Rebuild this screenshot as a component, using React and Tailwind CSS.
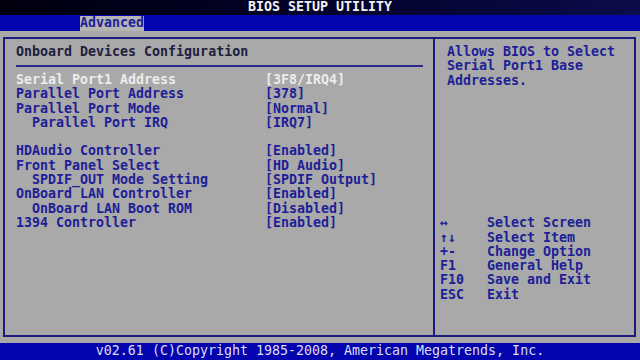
import React from 'react'

const rows = [
  { label: 'Serial Port1 Address', value: '[3F8/IRQ4]', active: true },
  { label: 'Parallel Port Address', value: '[378]' },
  { label: 'Parallel Port Mode', value: '[Normal]' },
  { label: 'Parallel Port IRQ', value: '[IRQ7]', sub: true },
  null,
  { label: 'HDAudio Controller', value: '[Enabled]' },
  { label: 'Front Panel Select', value: '[HD Audio]' },
  { label: 'SPDIF_OUT Mode Setting', value: '[SPDIF Output]', sub: true },
  { label: 'OnBoard LAN Controller', value: '[Enabled]' },
  { label: 'OnBoard LAN Boot ROM', value: '[Disabled]', sub: true },
  { label: '1394 Controller', value: '[Enabled]' },
]

const keys = [
  ['↔', 'Select Screen'],
  ['↑↓', 'Select Item'],
  ['+-', 'Change Option'],
  ['F1', 'General Help'],
  ['F10', 'Save and Exit'],
  ['ESC', 'Exit'],
]

export default function App() {
  return (
    <div className="w-[640px] h-[360px] flex flex-col bg-[#a9a9a9] overflow-hidden font-['DejaVu_Sans_Mono',monospace] font-bold text-[13.3px] leading-[14.3px] text-[#1e1e96]">
      {/* title */}
      <div className="h-[15px] flex items-center justify-center bg-gradient-to-r from-[#00000e] to-[#0c0c4a] text-[#f0f0f0]">
        BIOS SETUP UTILITY
      </div>
      {/* tabs */}
      <div className="h-[16px] flex items-center pl-[80px] bg-[#0505b0]">
        <span className="h-[15px] w-[64px] flex items-center bg-[#b4b4b4] text-[#1e1e9a]">Advanced</span>
      </div>

      <div className="flex-1 pt-[6px] pl-[3px] pr-[4px] pb-[6px]">
        <div className="h-full flex border-2 border-[#1c1c80]">
          {/* left panel */}
          <div className="w-[430px] pl-[11px] pr-[10px] pt-[6px] border-r-2 border-[#1c1c80]">
            <div className="h-[14px] flex items-center text-[#202040]">Onboard Devices Configuration</div>
            <div className="mt-[6px] h-[2px] bg-[#2a2a8a]" />
            <div className="mt-[6px]">
              {rows.map((r, i) =>
                r ? (
                  <div key={i} className="flex h-[14.3px] items-center">
                    <span className={(r.sub ? 'pl-[16px] ' : '') + 'w-[249px] ' + (r.active ? 'text-[#ececec]' : '')}>
                      {r.label}
                    </span>
                    <span className={r.active ? 'text-[#ececec]' : ''}>{r.value}</span>
                  </div>
                ) : (
                  <div key={i} className="h-[14.3px]" />
                )
              )}
            </div>
          </div>
          {/* right panel */}
          <div className="flex-1 flex flex-col pt-[6px]">
            <div className="pl-[12px]">
              <div className="h-[14.3px]">Allows BIOS to Select</div>
              <div className="h-[14.3px]">Serial Port1 Base</div>
              <div className="h-[14.3px]">Addresses.</div>
            </div>
            <div className="mt-auto pb-[33px] pl-[5px]">
              {keys.map(([k, d]) => (
                <div key={k} className="flex h-[14.3px] items-center">
                  <span className="w-[47px]">{k}</span>
                  <span>{d}</span>
                </div>
              ))}
            </div>
          </div>
        </div>
      </div>

      {/* footer */}
      <div className="h-[17px] flex items-center justify-center bg-[#0505b0] text-[#dcdcf0] font-normal">
        v02.61 (C)Copyright 1985-2008, American Megatrends, Inc.
      </div>
    </div>
  )
}
